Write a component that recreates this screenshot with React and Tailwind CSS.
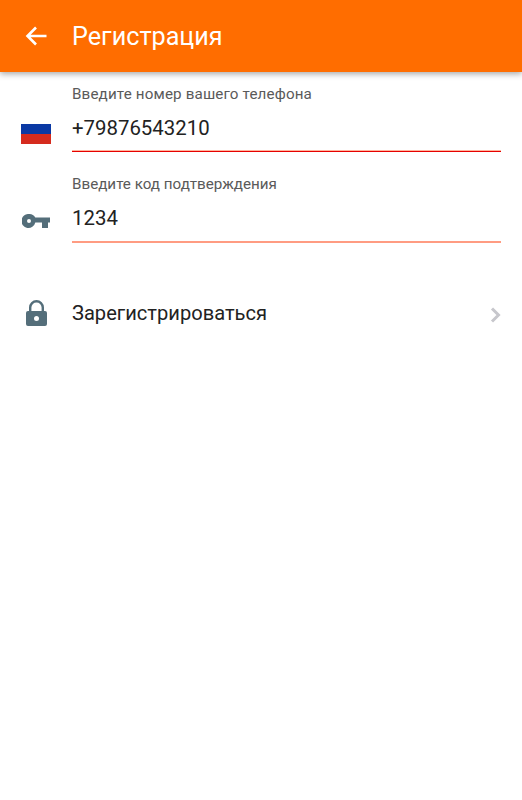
import React from 'react';

const font = 'font-["Roboto",sans-serif]';

const Field = ({ label, value, line, icon, top, tracking }) => (
  <div className={`flex ${top}`}>
    <div className="w-[72px] shrink-0 flex justify-center pt-[39px]">{icon}</div>
    <div className="w-[429px]">
      <p className={`text-[15.2px] leading-[20px] text-[#5a5a5a] ${tracking}`}>{label}</p>
      <p className="text-[20.4px] leading-[28px] mt-[10px] text-[#222]">{value}</p>
      <div className={line} />
    </div>
  </div>
);

const Flag = () => (
  <div className="w-[30px] h-[20px] mt-[1px]">
    <div className="h-[10px] bg-[#0a39a4]" />
    <div className="h-[10px] bg-[#d52b1e]" />
  </div>
);

const KeyIcon = () => (
  <svg width="28" height="14" viewBox="0 0 28 14" className="mt-[1px]">
    <path fillRule="evenodd" fill="#546e7a" d="M7 0a7 7 0 0 1 6.300 3.500H28v5h-2V14h-6V8.500h-6.700A7 7 0 1 1 7 0zM7 5a2 2 0 1 0 0 4 2 2 0 0 0 0-4z" />
  </svg>
);

const LockIcon = () => (
  <svg width="21" height="26" viewBox="0 0 21 26" className="ml-[1px]">
    <path fillRule="evenodd" fill="#546e7a" d="M10.500 0a7.500 7.500 0 0 1 7.500 7.500V11h1a2 2 0 0 1 2 2v11a2 2 0 0 1-2 2H2a2 2 0 0 1-2-2V13a2 2 0 0 1 2-2h1V7.500A7.500 7.500 0 0 1 10.500 0zm0 2.400a5.100 5.100 0 0 0-5.100 5.100V11h10.200V7.500a5.100 5.100 0 0 0-5.100-5.100zM10.500 16a2.500 2.500 0 1 0 0 5 2.500 2.500 0 0 0 0-5z" />
  </svg>
);

const App = () => (
  <div className={`w-[522px] h-[800px] bg-white overflow-hidden ${font}`}>
    <header className="h-[72px] bg-[#ff6d00] flex items-center shadow-[0_2px_6px_rgba(0,0,0,0.35)] relative">
      <svg width="24" height="24" viewBox="0 0 24 24" className="ml-[24px]">
        <path d="M22.500 12H3.500M12 3.500L3.500 12l8.500 8.500" fill="none" stroke="#fff" strokeWidth="2.600" />
      </svg>
      <h1 className="ml-[24px] mt-[1px] text-[25.2px] leading-[32px] text-white">Регистрация</h1>
    </header>

    <Field top="mt-[12px]" tracking="tracking-[0.14px]" label="Введите номер вашего телефона" value="+79876543210" line="mt-[8px] h-[2px] border-t border-[#ffb59e] bg-[#e60000]" icon={<Flag />} />
    <Field top="mt-[22px]" tracking="" label="Введите код подтверждения" value="1234" line="mt-[9px] h-[2px] bg-[#ff9c82]" icon={<KeyIcon />} />

    <div className="flex items-center mt-[52px] h-[36px]">
      <div className="w-[72px] shrink-0 flex justify-center"><LockIcon /></div>
      <span className="flex-1 text-[20.1px] leading-[28px] text-[#222]">Зарегистрироваться</span>
      <svg width="11" height="16" viewBox="0 0 11 16" className="mr-[21px] mt-[3px]">
        <path d="M2 1.500L8.500 8 2 14.500" fill="none" stroke="#c7c7cc" strokeWidth="3" />
      </svg>
    </div>
  </div>
);

export default App;
